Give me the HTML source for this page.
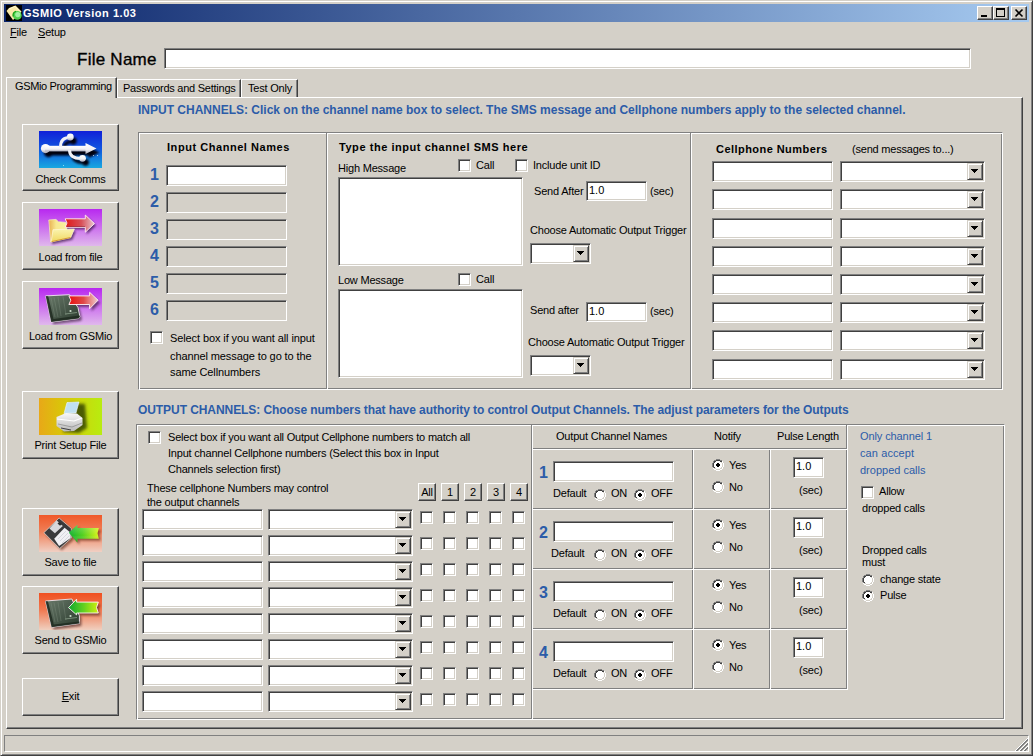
<!DOCTYPE html><html><head><meta charset="utf-8"><style>*{margin:0;padding:0;box-sizing:border-box}
html,body{width:1033px;height:756px;overflow:hidden;background:#D4D0C8}
#win{position:relative;width:1033px;height:756px;background:#D4D0C8;font-family:"Liberation Sans",sans-serif;font-size:11px;color:#000;overflow:hidden}
#win div{position:absolute}
.t{white-space:nowrap;line-height:12px;letter-spacing:-0.2px}
.b{white-space:nowrap;line-height:12px;font-weight:bold;letter-spacing:0.55px}
.bl{white-space:nowrap;line-height:14px;font-weight:bold;font-size:12px;color:#2C5CA8}
.num{white-space:nowrap;line-height:16px;font-weight:bold;font-size:16px;color:#2C5CA8}
.tb{border:1px solid;border-color:#808080 #FFFFFF #FFFFFF #808080;box-shadow:inset 1px 1px 0 #404040,inset -1px -1px 0 #D4D0C8}
.tv{position:absolute;left:2px;top:2px;line-height:12px;font-size:11px;white-space:nowrap}
.cb{border:1px solid;border-color:#808080 #FFFFFF #FFFFFF #808080;box-shadow:inset 1px 1px 0 #404040,inset -1px -1px 0 #D4D0C8;background:#fff}
.btn{border:1px solid;border-color:#FFFFFF #404040 #404040 #FFFFFF;box-shadow:inset -1px -1px 0 #808080;background:#D4D0C8}
.grp{border:1px solid;border-color:#808080 #FFFFFF #FFFFFF #808080;box-shadow:inset 1px 1px 0 #FFFFFF,inset -1px -1px 0 #808080}
.dd{right:1px;top:1px;width:16px;height:17px;border:1px solid;border-color:#D4D0C8 #404040 #404040 #D4D0C8;box-shadow:inset 1px 1px 0 #fff,inset -1px -1px 0 #808080;background:#D4D0C8}
.dd b{position:absolute;left:3px;top:5px;width:0;height:0;border-left:3.5px solid transparent;border-right:3.5px solid transparent;border-top:4px solid #000}
.rd{width:12px;height:12px}
.tab{border:1px solid;border-color:#fff #404040 transparent #fff;border-bottom:none;box-shadow:inset -1px 0 0 #808080;background:#D4D0C8}
.tab.sel{z-index:2}
.rd{width:12px;height:12px;border-radius:50%;border:1px solid;border-color:#808080 #fff #fff #808080;box-shadow:inset 1px 1px 0 #404040,inset -1px -1px 0 #D4D0C8;background:#fff}
.rd i{position:absolute;left:3px;top:3px;width:4px;height:4px;background:#000;border-radius:1px}
.tab.sel{z-index:0}
</style></head><body><div id="win"><div style="left:0;top:0;width:1033px;height:756px;border:1px solid;border-color:#D4D0C8 #404040 #404040 #D4D0C8;box-shadow:inset 1px 1px 0 #fff,inset -1px -1px 0 #808080"></div><div style="left:4px;top:4px;width:1025px;height:18px;background:linear-gradient(to right,#0A246A,#A6CAF0)"></div><div id="icon" style="left:6px;top:5px;width:16px;height:16px"><svg width="16" height="16" viewBox="0 0 16 16" style="position:absolute;left:0;top:0;display:block"><defs></defs>
<rect width="16" height="16" fill="#000"/>
<path d="M9.5 0.5 L15.5 6.5 L14 9 L7 15 L0.5 6 L3 3 Z" fill="#F8E8A8"/>
<path d="M3 4 L9 1.5 L14 6.5" fill="none" stroke="#FFF8D0" stroke-width="1"/>
<circle cx="11.3" cy="10.4" r="4.4" fill="#50D050"/>
<circle cx="11.8" cy="9.6" r="2.6" fill="#A0F0A0"/>
<path d="M7.2 11.5 A4.4 4.4 0 0 1 10 6.3" stroke="#10A010" stroke-width="1.2" fill="none"/>
</svg></div><div class="b" style="left:23px;top:7px;color:#fff;letter-spacing:0.53px">GSMIO Version 1.03</div><div class="btn" style="left:977px;top:6px;width:16px;height:14px;"><div style="left:3px;top:8px;width:6px;height:2px;background:#000"></div></div><div class="btn" style="left:993px;top:6px;width:16px;height:14px;"><div style="left:2px;top:1px;width:9px;height:9px;border:1px solid #000;border-top-width:2px"></div></div><div class="btn" style="left:1011px;top:6px;width:16px;height:14px;"><svg width="16" height="14" style="position:absolute;left:-1px;top:-1px"><path d="M4.5 3.5 L11.5 10.5 M11.5 3.5 L4.5 10.5" stroke="#000" stroke-width="1.6"/></svg></div><div class="t" style="left:10px;top:26px;"><u>F</u>ile</div><div class="t" style="left:38px;top:26px;"><u>S</u>etup</div><div class="t" style="left:77px;top:51px;font-size:17px;line-height:18px;letter-spacing:0.25px;-webkit-text-stroke:0.35px #000">File Name</div><div class="tb" style="left:164px;top:48px;width:807px;height:21px;background:#fff;"></div><div style="left:6px;top:97px;width:1017px;height:632px;border:1px solid;border-color:#FFFFFF #404040 #404040 #FFFFFF;box-shadow:inset -1px -1px 0 #808080"></div><div class="tab" style="left:117px;top:79px;width:124px;height:18px"></div><div class="tab" style="left:241px;top:79px;width:57px;height:18px"></div><div class="tab sel" style="left:6px;top:77px;width:111px;height:21px"></div><div class="t" style="left:15px;top:80px;letter-spacing:-0.35px">GSMio Programming</div><div class="t" style="left:123px;top:82px;letter-spacing:-0.25px">Passwords and Settings</div><div class="t" style="left:248px;top:82px;letter-spacing:-0.2px">Test Only</div><div class="btn" style="left:22px;top:124px;width:97px;height:67px;"></div><div style="left:39px;top:131px;width:63px;height:37px"><svg width="63" height="37" viewBox="0 0 63 37" style="position:absolute;left:0;top:0;display:block"><defs><linearGradient id="gusb" x1="0" y1="0" x2="0" y2="1"><stop offset="0" stop-color="#1020D8"/><stop offset="0.5" stop-color="#1058E0"/><stop offset="1" stop-color="#18A8E0"/></linearGradient>
<filter id="fblur" x="-20%" y="-20%" width="140%" height="140%"><feGaussianBlur stdDeviation="0.95"/></filter>
<linearGradient id="gwhite" x1="0" y1="0" x2="0" y2="1"><stop offset="0" stop-color="#FFFFFF"/><stop offset="0.6" stop-color="#F0F0F4"/><stop offset="1" stop-color="#A8A8B8"/></linearGradient></defs><rect width="63" height="37" fill="url(#gusb)"/><g filter="url(#fblur)" opacity="1"><g transform="translate(3,4)">
<circle cx="6.5" cy="17.6" r="4.6" fill="#000010"/>
<rect x="6" y="14.8" width="42" height="5.6" fill="#000010"/>
<path d="M46.5 12 L57.5 17.5 L46.5 23 Z" fill="#000010"/>
<path d="M21.5 16 C21.5 10 24 6.5 30.5 6.5" stroke="#000010" stroke-width="3" fill="none"/>
<circle cx="31.3" cy="6" r="3.4" fill="#000010"/>
<path d="M30.5 19 C30.5 24.5 34 27.5 42 27.5" stroke="#000010" stroke-width="3" fill="none"/>
<circle cx="43.5" cy="27.3" r="3.4" fill="#000010"/>
</g></g><g transform="translate(0,0)">
<circle cx="6.5" cy="17.6" r="4.6" fill="url(#gwhite)"/>
<rect x="6" y="14.8" width="42" height="5.6" fill="url(#gwhite)"/>
<path d="M46.5 12 L57.5 17.5 L46.5 23 Z" fill="url(#gwhite)"/>
<path d="M21.5 16 C21.5 10 24 6.5 30.5 6.5" stroke="#F0F0F6" stroke-width="3" fill="none"/>
<circle cx="31.3" cy="6" r="3.4" fill="url(#gwhite)"/>
<path d="M30.5 19 C30.5 24.5 34 27.5 42 27.5" stroke="#F0F0F6" stroke-width="3" fill="none"/>
<circle cx="43.5" cy="27.3" r="3.4" fill="url(#gwhite)"/>
</g><rect x="54" y="24" width="0.8" height="0.8" fill="#fff"/><rect x="58" y="24" width="0.8" height="0.8" fill="#fff"/><rect x="24" y="34" width="0.8" height="0.8" fill="#cff"/></svg></div><div class="t" style="left:22px;width:97px;top:173px;text-align:center">Check Comms</div><div class="btn" style="left:22px;top:202px;width:97px;height:68px;"></div><div style="left:39px;top:209px;width:63px;height:37px"><svg width="63" height="37" viewBox="0 0 63 37" style="position:absolute;left:0;top:0;display:block"><defs><linearGradient id="gpur" x1="0" y1="0" x2="0" y2="1"><stop offset="0" stop-color="#B828F0"/><stop offset="1" stop-color="#E0B8EC"/></linearGradient>
<linearGradient id="gred" x1="0" y1="0" x2="1" y2="0"><stop offset="0" stop-color="#E01818"/><stop offset="0.55" stop-color="#D85058"/><stop offset="1" stop-color="#E8C8D0"/></linearGradient>
<linearGradient id="gyel" x1="0" y1="0" x2="0" y2="1"><stop offset="0" stop-color="#FAF4B0"/><stop offset="1" stop-color="#F0D860"/></linearGradient>
<linearGradient id="gyb" x1="0" y1="0" x2="1" y2="0"><stop offset="0" stop-color="#E8B050"/><stop offset="0.4" stop-color="#F8E890"/><stop offset="1" stop-color="#F8F0A0"/></linearGradient>
<filter id="fb2" x="-20%" y="-20%" width="140%" height="140%"><feGaussianBlur stdDeviation="0.9"/></filter></defs><rect width="63" height="37" fill="url(#gpur)"/><g filter="url(#fb2)" opacity="0.7" transform="translate(1.5,2)"><path d="M26.2 9.8 L46.3 9.8 L46.3 6.1 L55.5 14.6 L46.3 23.2 L46.3 18.3 L26.2 18.3 L28 14 Z" fill="#301040"/><path d="M14 20.7 L35.4 20 L31.7 28.7 L12.2 33 Z" fill="#301040"/><path d="M9.8 11 L17 10.4 L19.5 12.8 L27 13.4 L28 21 L12.2 33 L11.6 33 Z" fill="#301040"/></g><path d="M9.8 11 L17 10.4 L19.5 12.8 L27 13.4 L28 21 L12.2 33 L11.6 33 Z" fill="url(#gyb)" stroke="#F8F0C8" stroke-width="0.7"/><path d="M26.2 9.8 L46.3 9.8 L46.3 6.1 L55.5 14.6 L46.3 23.2 L46.3 18.3 L26.2 18.3 L28 14 Z" fill="url(#gred)" stroke="#FFF0F8" stroke-width="0.9"/><path d="M28 17.6 L46 17.6" stroke="#801020" stroke-width="0.8" opacity="0.7"/><path d="M14 20.7 L35.4 20 L31.7 28.7 L12.2 33 Z" fill="url(#gyel)" stroke="#FFF8D8" stroke-width="0.7"/><path d="M12.6 32.6 L31.5 28.5" stroke="#D09020" stroke-width="0.9"/></svg></div><div class="t" style="left:22px;width:97px;top:251px;text-align:center">Load from file</div><div class="btn" style="left:22px;top:281px;width:97px;height:68px;"></div><div style="left:39px;top:288px;width:63px;height:37px"><svg width="63" height="37" viewBox="0 0 63 37" style="position:absolute;left:0;top:0;display:block"><defs><linearGradient id="gbgr" x1="0" y1="0" x2="0" y2="1"><stop offset="0" stop-color="#B828F0"/><stop offset="1" stop-color="#E0B8EC"/></linearGradient>
<linearGradient id="gred2" x1="0" y1="0" x2="1" y2="0"><stop offset="0" stop-color="#E81010"/><stop offset="0.5" stop-color="#E04848"/><stop offset="1" stop-color="#F0D0D0"/></linearGradient>
<linearGradient id="ggrn" x1="0" y1="0" x2="1" y2="0"><stop offset="0" stop-color="#10A830"/><stop offset="0.5" stop-color="#60D020"/><stop offset="1" stop-color="#D0F010"/></linearGradient>
<linearGradient id="gdevr" x1="0" y1="0" x2="1" y2="1"><stop offset="0" stop-color="#6A7A6A"/><stop offset="0.5" stop-color="#4A5A4C"/><stop offset="1" stop-color="#2A3A2C"/></linearGradient>
<filter id="fb3r" x="-20%" y="-20%" width="140%" height="140%"><feGaussianBlur stdDeviation="1"/></filter></defs><rect width="63" height="37" fill="url(#gbgr)"/><g filter="url(#fb3r)" opacity="0.6" transform="translate(2,2.5)"><path d="M6.7 7.9 L30.5 6.7 L39 19.5 L40.9 28.7 L39.6 30.5 L12.2 34.1 Z" fill="#301830"/><path d="M29.9 7.9 L50.6 7.9 L50.6 4.3 L59.1 12.2 L50.6 20.7 L50.6 16.5 L29.9 16.5 L31.8 12.2 Z" fill="#301830"/></g><path d="M6.7 7.9 L30.5 6.7 L39 19.5 L40.9 28.7 L39.6 30.5 L12.2 34.1 Z" fill="url(#gdevr)" stroke="#F0E8F0" stroke-width="0.9"/><path d="M12 10 L16 29 M15 9.5 L19 29 M19 9 L22 28 M24 8.5 L27 27" stroke="#8A9A8A" stroke-width="0.5" opacity="0.6"/><path d="M6.7 7.9 L9.2 8.3 L14.5 31 L40.6 27.6 L40.9 28.7 L39.6 30.5 L12.2 34.1 Z" fill="#1E2A20" opacity="0.85"/><circle cx="31.5" cy="23" r="1.1" fill="#D0E0D0"/><path d="M26 26 L38 24.5" stroke="#90A890" stroke-width="0.7"/><path d="M29.9 7.9 L50.6 7.9 L50.6 4.3 L59.1 12.2 L50.6 20.7 L50.6 16.5 L29.9 16.5 L31.8 12.2 Z" fill="url(#gred2)" stroke="#FFF4F8" stroke-width="0.9"/></svg></div><div class="t" style="left:22px;width:97px;top:330px;text-align:center">Load from GSMio</div><div class="btn" style="left:22px;top:391px;width:97px;height:68px;"></div><div style="left:39px;top:398px;width:63px;height:37px"><svg width="63" height="37" viewBox="0 0 63 37" style="position:absolute;left:0;top:0;display:block"><defs><linearGradient id="gpr" x1="0" y1="0" x2="1" y2="0"><stop offset="0" stop-color="#E8A818"/><stop offset="0.4" stop-color="#D8C808"/><stop offset="1" stop-color="#B8EC10"/></linearGradient>
<linearGradient id="gpb" x1="0" y1="0" x2="0" y2="1"><stop offset="0" stop-color="#F8F8F8"/><stop offset="1" stop-color="#B8B8B8"/></linearGradient>
<filter id="fb4" x="-30%" y="-30%" width="160%" height="160%"><feGaussianBlur stdDeviation="1.6"/></filter></defs><rect width="63" height="37" fill="url(#gpr)"/><g filter="url(#fb4)" opacity="0.75"><path d="M30 5 L46 6 L48 30 L40 35 L24 34 Z" fill="#203000"/></g><path d="M28 4.5 L40 4 L37 15 L25 15.5 Z" fill="#C0E0F0" stroke="#F0F8FF" stroke-width="0.6"/><path d="M17.5 19 L27 15 L38 15.5 L43.5 20 L43.5 27 L35 33 L25 33.5 L17.5 28 Z" fill="url(#gpb)"/><path d="M18 21 L35 23 L43 20" stroke="#FFFFFF" stroke-width="1.2" fill="none"/><path d="M19 26 L33 29 L43 25" stroke="#909090" stroke-width="0.8" fill="none"/><path d="M22 30 L32 32" stroke="#404040" stroke-width="1" fill="none"/></svg></div><div class="t" style="left:22px;width:97px;top:439px;text-align:center">Print Setup File</div><div class="btn" style="left:22px;top:508px;width:97px;height:68px;"></div><div style="left:39px;top:515px;width:63px;height:37px"><svg width="63" height="37" viewBox="0 0 63 37" style="position:absolute;left:0;top:0;display:block"><defs><linearGradient id="gor" x1="0" y1="0" x2="0" y2="1"><stop offset="0" stop-color="#F05828"/><stop offset="0.45" stop-color="#F08058"/><stop offset="1" stop-color="#F0D0C4"/></linearGradient>
<linearGradient id="ggrn2" x1="0" y1="0" x2="1" y2="0"><stop offset="0" stop-color="#10B030"/><stop offset="0.45" stop-color="#50D020"/><stop offset="1" stop-color="#D8F418"/></linearGradient>
<linearGradient id="gglos" x1="0" y1="0" x2="0" y2="1"><stop offset="0" stop-color="#FFFFFF" stop-opacity="0.25"/><stop offset="0.6" stop-color="#FFFFFF" stop-opacity="0"/><stop offset="1" stop-color="#004000" stop-opacity="0.35"/></linearGradient>
<filter id="fb5" x="-20%" y="-20%" width="140%" height="140%"><feGaussianBlur stdDeviation="1"/></filter></defs><rect width="63" height="37" fill="url(#gor)"/><g filter="url(#fb5)" opacity="0.5" transform="translate(2,2)"><path d="M4.9 17.7 L20.1 3 L32.3 13.4 L32.3 23.2 L20.7 33.5 Z" fill="#401000"/><path d="M29.9 17.7 L38.4 9.8 L38.4 13.1 L59.8 13.1 L58.5 18.3 L59.8 23.8 L38.4 23.8 L38.4 27.4 Z" fill="#401000"/></g><path d="M4.9 17.7 L20.1 3 L32.3 13.4 L32.3 23.2 L20.7 33.5 Z" fill="#3A3A3C" stroke="#E8E0D8" stroke-width="0.7"/><path d="M10.4 13.4 L17.7 5.5 L23.8 11 L15.9 18.3 Z" fill="#D8D8DC"/><path d="M18.5 8.5 L20.5 6.8 L23 9 L21 10.8 Z" fill="#303030"/><path d="M15.2 23.8 L25.6 12.8 L31.7 17.8 L31.7 23 L20.1 31.1 Z" fill="#F0F0F4"/><path d="M19 24 L27 16 M21 26 L29 18 M23 28 L30.5 20.5" stroke="#B0B0C0" stroke-width="0.4"/><path d="M29.9 17.7 L38.4 9.8 L38.4 13.1 L59.8 13.1 L58.5 18.3 L59.8 23.8 L38.4 23.8 L38.4 27.4 Z" fill="url(#ggrn2)"/><path d="M29.9 17.7 L38.4 9.8 L38.4 13.1 L59.8 13.1 L58.5 18.3 L59.8 23.8 L38.4 23.8 L38.4 27.4 Z" fill="url(#gglos)"/></svg></div><div class="t" style="left:22px;width:97px;top:556px;text-align:center">Save to file</div><div class="btn" style="left:22px;top:586px;width:97px;height:68px;"></div><div style="left:39px;top:593px;width:63px;height:37px"><svg width="63" height="37" viewBox="0 0 63 37" style="position:absolute;left:0;top:0;display:block"><defs><linearGradient id="gbgg" x1="0" y1="0" x2="0" y2="1"><stop offset="0" stop-color="#F05020"/><stop offset="0.45" stop-color="#F07850"/><stop offset="1" stop-color="#F0D0C0"/></linearGradient>
<linearGradient id="gred2" x1="0" y1="0" x2="1" y2="0"><stop offset="0" stop-color="#E81010"/><stop offset="0.5" stop-color="#E04848"/><stop offset="1" stop-color="#F0D0D0"/></linearGradient>
<linearGradient id="ggrn" x1="0" y1="0" x2="1" y2="0"><stop offset="0" stop-color="#10A830"/><stop offset="0.5" stop-color="#60D020"/><stop offset="1" stop-color="#D0F010"/></linearGradient>
<linearGradient id="gdevg" x1="0" y1="0" x2="1" y2="1"><stop offset="0" stop-color="#6A7A6A"/><stop offset="0.5" stop-color="#4A5A4C"/><stop offset="1" stop-color="#2A3A2C"/></linearGradient>
<filter id="fb3g" x="-20%" y="-20%" width="140%" height="140%"><feGaussianBlur stdDeviation="1"/></filter></defs><rect width="63" height="37" fill="url(#gbgg)"/><g filter="url(#fb3g)" opacity="0.6" transform="translate(2,2.5)"><path d="M6.5 8 L32.9 6 L40.4 22.7 L40.4 30.5 L12.6 34.3 Z" fill="#401818"/><path d="M29.5 14.6 L37.6 6.2 L37.6 9.1 L59.3 9.1 L57.5 14.5 L59.3 20 L37.6 20 L37.6 21.9 Z" fill="#401818"/></g><path d="M6.5 8 L32.9 6 L40.4 22.7 L40.4 30.5 L12.6 34.3 Z" fill="url(#gdevg)" stroke="#F0E8F0" stroke-width="0.9"/><path d="M12 10 L16 29 M15 9.5 L19 29 M19 9 L22 28 M24 8.5 L27 27" stroke="#8A9A8A" stroke-width="0.5" opacity="0.6"/><path d="M6.5 8 L9 8.4 L14.8 31.6 L40.4 28.5 L40.4 30.5 L12.6 34.3 Z" fill="#1E2A20" opacity="0.85"/><circle cx="31.5" cy="23" r="1.1" fill="#D0E0D0"/><path d="M26 26 L38 24.5" stroke="#90A890" stroke-width="0.7"/><path d="M29.5 14.6 L37.6 6.2 L37.6 9.1 L59.3 9.1 L57.5 14.5 L59.3 20 L37.6 20 L37.6 21.9 Z" fill="url(#ggrn)" stroke="#FFF4F8" stroke-width="0.9"/></svg></div><div class="t" style="left:22px;width:97px;top:634px;text-align:center">Send to GSMio</div><div class="btn" style="left:22px;top:678px;width:97px;height:38px;"></div><div class="t" style="left:22px;width:97px;top:690px;text-align:center"><u>E</u>xit</div><div class="bl" style="left:138px;top:103px;">INPUT CHANNELS: Click on the channel name box to select. The SMS message and Cellphone numbers apply to the selected channel.</div><div class="grp" style="left:138px;top:132px;width:865px;height:258px;"></div><div style="left:326px;top:132px;width:1px;height:257px;background:#808080"></div><div style="left:327px;top:133px;width:1px;height:257px;background:#fff;z-index:1"></div><div style="left:690px;top:132px;width:1px;height:257px;background:#808080"></div><div style="left:691px;top:133px;width:1px;height:257px;background:#fff;z-index:1"></div><div class="b" style="left:167px;top:141px;">Input Channel Names</div><div class="tb" style="left:166px;top:165px;width:121px;height:21px;background:#fff;"></div><div class="num" style="left:150px;top:167px;">1</div><div class="tb" style="left:166px;top:192px;width:121px;height:21px;background:#D4D0C8;"></div><div class="num" style="left:150px;top:194px;">2</div><div class="tb" style="left:166px;top:219px;width:121px;height:21px;background:#D4D0C8;"></div><div class="num" style="left:150px;top:221px;">3</div><div class="tb" style="left:166px;top:246px;width:121px;height:21px;background:#D4D0C8;"></div><div class="num" style="left:150px;top:248px;">4</div><div class="tb" style="left:166px;top:273px;width:121px;height:21px;background:#D4D0C8;"></div><div class="num" style="left:150px;top:275px;">5</div><div class="tb" style="left:166px;top:300px;width:121px;height:21px;background:#D4D0C8;"></div><div class="num" style="left:150px;top:302px;">6</div><div class="cb" style="left:150px;top:331px;width:13px;height:13px;"></div><div class="t" style="left:170px;top:332px;letter-spacing:-0.1px">Select box if you want all input</div><div class="t" style="left:170px;top:350px;letter-spacing:-0.1px">channel message to go to the</div><div class="t" style="left:170px;top:366px;letter-spacing:-0.1px">same Cellnumbers</div><div class="b" style="left:339px;top:141px;">Type the input channel SMS here</div><div class="t" style="left:338px;top:162px;">High Message</div><div class="cb" style="left:458px;top:159px;width:13px;height:13px;"></div><div class="t" style="left:476px;top:159px;">Call</div><div class="cb" style="left:515px;top:159px;width:13px;height:13px;"></div><div class="t" style="left:533px;top:159px;">Include unit ID</div><div class="tb" style="left:338px;top:177px;width:185px;height:89px;background:#fff;"></div><div class="t" style="left:534px;top:185px;">Send After</div><div class="tb" style="left:586px;top:181px;width:61px;height:20px;background:#fff;"><span class="tv">1.0</span></div><div class="t" style="left:650px;top:185px;">(sec)</div><div class="t" style="left:530px;top:224px;">Choose Automatic Output Trigger</div><div class="tb" style="left:530px;top:243px;width:61px;height:21px;background:#fff"><div class="dd"><svg width="7" height="4" style="position:absolute;left:3px;top:5px" shape-rendering="crispEdges"><path d="M0 0h7v1h-1v1h-1v1h-1v1h-1v-1h-1v-1h-1v-1h-1z" fill="#000"/></svg></div></div><div class="t" style="left:338px;top:274px;">Low Message</div><div class="cb" style="left:458px;top:273px;width:13px;height:13px;"></div><div class="t" style="left:476px;top:273px;">Call</div><div class="tb" style="left:338px;top:289px;width:185px;height:89px;background:#fff;"></div><div class="t" style="left:530px;top:304px;">Send after</div><div class="tb" style="left:586px;top:302px;width:61px;height:20px;background:#fff;"><span class="tv">1.0</span></div><div class="t" style="left:650px;top:305px;">(sec)</div><div class="t" style="left:528px;top:336px;">Choose Automatic Output Trigger</div><div class="tb" style="left:530px;top:355px;width:61px;height:21px;background:#fff"><div class="dd"><svg width="7" height="4" style="position:absolute;left:3px;top:5px" shape-rendering="crispEdges"><path d="M0 0h7v1h-1v1h-1v1h-1v1h-1v-1h-1v-1h-1v-1h-1z" fill="#000"/></svg></div></div><div class="b" style="left:716px;top:143px;letter-spacing:0.45px">Cellphone Numbers</div><div class="t" style="left:852px;top:143px;">(send messages to...)</div><div class="tb" style="left:712px;top:161px;width:121px;height:21px;background:#fff;"></div><div class="tb" style="left:840px;top:161px;width:145px;height:21px;background:#fff"><div class="dd"><svg width="7" height="4" style="position:absolute;left:3px;top:5px" shape-rendering="crispEdges"><path d="M0 0h7v1h-1v1h-1v1h-1v1h-1v-1h-1v-1h-1v-1h-1z" fill="#000"/></svg></div></div><div class="tb" style="left:712px;top:189px;width:121px;height:21px;background:#fff;"></div><div class="tb" style="left:840px;top:189px;width:145px;height:21px;background:#fff"><div class="dd"><svg width="7" height="4" style="position:absolute;left:3px;top:5px" shape-rendering="crispEdges"><path d="M0 0h7v1h-1v1h-1v1h-1v1h-1v-1h-1v-1h-1v-1h-1z" fill="#000"/></svg></div></div><div class="tb" style="left:712px;top:218px;width:121px;height:21px;background:#fff;"></div><div class="tb" style="left:840px;top:218px;width:145px;height:21px;background:#fff"><div class="dd"><svg width="7" height="4" style="position:absolute;left:3px;top:5px" shape-rendering="crispEdges"><path d="M0 0h7v1h-1v1h-1v1h-1v1h-1v-1h-1v-1h-1v-1h-1z" fill="#000"/></svg></div></div><div class="tb" style="left:712px;top:246px;width:121px;height:21px;background:#fff;"></div><div class="tb" style="left:840px;top:246px;width:145px;height:21px;background:#fff"><div class="dd"><svg width="7" height="4" style="position:absolute;left:3px;top:5px" shape-rendering="crispEdges"><path d="M0 0h7v1h-1v1h-1v1h-1v1h-1v-1h-1v-1h-1v-1h-1z" fill="#000"/></svg></div></div><div class="tb" style="left:712px;top:274px;width:121px;height:21px;background:#fff;"></div><div class="tb" style="left:840px;top:274px;width:145px;height:21px;background:#fff"><div class="dd"><svg width="7" height="4" style="position:absolute;left:3px;top:5px" shape-rendering="crispEdges"><path d="M0 0h7v1h-1v1h-1v1h-1v1h-1v-1h-1v-1h-1v-1h-1z" fill="#000"/></svg></div></div><div class="tb" style="left:712px;top:302px;width:121px;height:21px;background:#fff;"></div><div class="tb" style="left:840px;top:302px;width:145px;height:21px;background:#fff"><div class="dd"><svg width="7" height="4" style="position:absolute;left:3px;top:5px" shape-rendering="crispEdges"><path d="M0 0h7v1h-1v1h-1v1h-1v1h-1v-1h-1v-1h-1v-1h-1z" fill="#000"/></svg></div></div><div class="tb" style="left:712px;top:330px;width:121px;height:21px;background:#fff;"></div><div class="tb" style="left:840px;top:330px;width:145px;height:21px;background:#fff"><div class="dd"><svg width="7" height="4" style="position:absolute;left:3px;top:5px" shape-rendering="crispEdges"><path d="M0 0h7v1h-1v1h-1v1h-1v1h-1v-1h-1v-1h-1v-1h-1z" fill="#000"/></svg></div></div><div class="tb" style="left:712px;top:359px;width:121px;height:21px;background:#fff;"></div><div class="tb" style="left:840px;top:359px;width:145px;height:21px;background:#fff"><div class="dd"><svg width="7" height="4" style="position:absolute;left:3px;top:5px" shape-rendering="crispEdges"><path d="M0 0h7v1h-1v1h-1v1h-1v1h-1v-1h-1v-1h-1v-1h-1z" fill="#000"/></svg></div></div><div class="bl" style="left:138px;top:403px;letter-spacing:-0.07px">OUTPUT CHANNELS: Choose numbers that have authority to control Output Channels. The adjust parameters for the Outputs</div><div class="grp" style="left:136px;top:424px;width:869px;height:296px;"></div><div class="cb" style="left:148px;top:431px;width:13px;height:13px;"></div><div class="t" style="left:168px;top:431px;">Select box if you want all Output Cellphone numbers to match all</div><div class="t" style="left:168px;top:447px;">Input channel Cellphone numbers (Select this box in Input</div><div class="t" style="left:168px;top:463px;">Channels selection first)</div><div class="t" style="left:147px;top:482px;">These cellphone Numbers may control</div><div class="t" style="left:147px;top:496px;">the output channels</div><div class="btn" style="left:418px;top:483px;width:18px;height:18px;"><span style="position:absolute;left:0;right:0;top:2px;text-align:center;line-height:12px;letter-spacing:-0.3px">All</span></div><div class="btn" style="left:441px;top:483px;width:18px;height:18px;"><span style="position:absolute;left:0;right:0;top:2px;text-align:center;line-height:12px;letter-spacing:-0.3px">1</span></div><div class="btn" style="left:464px;top:483px;width:18px;height:18px;"><span style="position:absolute;left:0;right:0;top:2px;text-align:center;line-height:12px;letter-spacing:-0.3px">2</span></div><div class="btn" style="left:487px;top:483px;width:18px;height:18px;"><span style="position:absolute;left:0;right:0;top:2px;text-align:center;line-height:12px;letter-spacing:-0.3px">3</span></div><div class="btn" style="left:510px;top:483px;width:18px;height:18px;"><span style="position:absolute;left:0;right:0;top:2px;text-align:center;line-height:12px;letter-spacing:-0.3px">4</span></div><div class="tb" style="left:142px;top:509px;width:121px;height:21px;background:#fff;"></div><div class="tb" style="left:268px;top:509px;width:145px;height:21px;background:#fff"><div class="dd"><svg width="7" height="4" style="position:absolute;left:3px;top:5px" shape-rendering="crispEdges"><path d="M0 0h7v1h-1v1h-1v1h-1v1h-1v-1h-1v-1h-1v-1h-1z" fill="#000"/></svg></div></div><div class="cb" style="left:420px;top:511px;width:13px;height:13px;"></div><div class="cb" style="left:443px;top:511px;width:13px;height:13px;"></div><div class="cb" style="left:466px;top:511px;width:13px;height:13px;"></div><div class="cb" style="left:489px;top:511px;width:13px;height:13px;"></div><div class="cb" style="left:512px;top:511px;width:13px;height:13px;"></div><div class="tb" style="left:142px;top:535px;width:121px;height:21px;background:#fff;"></div><div class="tb" style="left:268px;top:535px;width:145px;height:21px;background:#fff"><div class="dd"><svg width="7" height="4" style="position:absolute;left:3px;top:5px" shape-rendering="crispEdges"><path d="M0 0h7v1h-1v1h-1v1h-1v1h-1v-1h-1v-1h-1v-1h-1z" fill="#000"/></svg></div></div><div class="cb" style="left:420px;top:537px;width:13px;height:13px;"></div><div class="cb" style="left:443px;top:537px;width:13px;height:13px;"></div><div class="cb" style="left:466px;top:537px;width:13px;height:13px;"></div><div class="cb" style="left:489px;top:537px;width:13px;height:13px;"></div><div class="cb" style="left:512px;top:537px;width:13px;height:13px;"></div><div class="tb" style="left:142px;top:561px;width:121px;height:21px;background:#fff;"></div><div class="tb" style="left:268px;top:561px;width:145px;height:21px;background:#fff"><div class="dd"><svg width="7" height="4" style="position:absolute;left:3px;top:5px" shape-rendering="crispEdges"><path d="M0 0h7v1h-1v1h-1v1h-1v1h-1v-1h-1v-1h-1v-1h-1z" fill="#000"/></svg></div></div><div class="cb" style="left:420px;top:563px;width:13px;height:13px;"></div><div class="cb" style="left:443px;top:563px;width:13px;height:13px;"></div><div class="cb" style="left:466px;top:563px;width:13px;height:13px;"></div><div class="cb" style="left:489px;top:563px;width:13px;height:13px;"></div><div class="cb" style="left:512px;top:563px;width:13px;height:13px;"></div><div class="tb" style="left:142px;top:587px;width:121px;height:21px;background:#fff;"></div><div class="tb" style="left:268px;top:587px;width:145px;height:21px;background:#fff"><div class="dd"><svg width="7" height="4" style="position:absolute;left:3px;top:5px" shape-rendering="crispEdges"><path d="M0 0h7v1h-1v1h-1v1h-1v1h-1v-1h-1v-1h-1v-1h-1z" fill="#000"/></svg></div></div><div class="cb" style="left:420px;top:589px;width:13px;height:13px;"></div><div class="cb" style="left:443px;top:589px;width:13px;height:13px;"></div><div class="cb" style="left:466px;top:589px;width:13px;height:13px;"></div><div class="cb" style="left:489px;top:589px;width:13px;height:13px;"></div><div class="cb" style="left:512px;top:589px;width:13px;height:13px;"></div><div class="tb" style="left:142px;top:613px;width:121px;height:21px;background:#fff;"></div><div class="tb" style="left:268px;top:613px;width:145px;height:21px;background:#fff"><div class="dd"><svg width="7" height="4" style="position:absolute;left:3px;top:5px" shape-rendering="crispEdges"><path d="M0 0h7v1h-1v1h-1v1h-1v1h-1v-1h-1v-1h-1v-1h-1z" fill="#000"/></svg></div></div><div class="cb" style="left:420px;top:615px;width:13px;height:13px;"></div><div class="cb" style="left:443px;top:615px;width:13px;height:13px;"></div><div class="cb" style="left:466px;top:615px;width:13px;height:13px;"></div><div class="cb" style="left:489px;top:615px;width:13px;height:13px;"></div><div class="cb" style="left:512px;top:615px;width:13px;height:13px;"></div><div class="tb" style="left:142px;top:639px;width:121px;height:21px;background:#fff;"></div><div class="tb" style="left:268px;top:639px;width:145px;height:21px;background:#fff"><div class="dd"><svg width="7" height="4" style="position:absolute;left:3px;top:5px" shape-rendering="crispEdges"><path d="M0 0h7v1h-1v1h-1v1h-1v1h-1v-1h-1v-1h-1v-1h-1z" fill="#000"/></svg></div></div><div class="cb" style="left:420px;top:641px;width:13px;height:13px;"></div><div class="cb" style="left:443px;top:641px;width:13px;height:13px;"></div><div class="cb" style="left:466px;top:641px;width:13px;height:13px;"></div><div class="cb" style="left:489px;top:641px;width:13px;height:13px;"></div><div class="cb" style="left:512px;top:641px;width:13px;height:13px;"></div><div class="tb" style="left:142px;top:665px;width:121px;height:21px;background:#fff;"></div><div class="tb" style="left:268px;top:665px;width:145px;height:21px;background:#fff"><div class="dd"><svg width="7" height="4" style="position:absolute;left:3px;top:5px" shape-rendering="crispEdges"><path d="M0 0h7v1h-1v1h-1v1h-1v1h-1v-1h-1v-1h-1v-1h-1z" fill="#000"/></svg></div></div><div class="cb" style="left:420px;top:667px;width:13px;height:13px;"></div><div class="cb" style="left:443px;top:667px;width:13px;height:13px;"></div><div class="cb" style="left:466px;top:667px;width:13px;height:13px;"></div><div class="cb" style="left:489px;top:667px;width:13px;height:13px;"></div><div class="cb" style="left:512px;top:667px;width:13px;height:13px;"></div><div class="tb" style="left:142px;top:691px;width:121px;height:21px;background:#fff;"></div><div class="tb" style="left:268px;top:691px;width:145px;height:21px;background:#fff"><div class="dd"><svg width="7" height="4" style="position:absolute;left:3px;top:5px" shape-rendering="crispEdges"><path d="M0 0h7v1h-1v1h-1v1h-1v1h-1v-1h-1v-1h-1v-1h-1z" fill="#000"/></svg></div></div><div class="cb" style="left:420px;top:693px;width:13px;height:13px;"></div><div class="cb" style="left:443px;top:693px;width:13px;height:13px;"></div><div class="cb" style="left:466px;top:693px;width:13px;height:13px;"></div><div class="cb" style="left:489px;top:693px;width:13px;height:13px;"></div><div class="cb" style="left:512px;top:693px;width:13px;height:13px;"></div><div style="left:531px;top:424px;width:1px;height:295px;background:#808080"></div><div style="left:532px;top:425px;width:1px;height:295px;background:#fff;z-index:1"></div><div style="left:846px;top:424px;width:1px;height:265px;background:#808080"></div><div style="left:847px;top:425px;width:1px;height:265px;background:#fff;z-index:1"></div><div style="left:531px;top:448px;width:316px;height:1px;background:#808080"></div><div style="left:532px;top:449px;width:316px;height:1px;background:#fff;z-index:1"></div><div style="left:531px;top:508px;width:316px;height:1px;background:#808080"></div><div style="left:532px;top:509px;width:316px;height:1px;background:#fff;z-index:1"></div><div style="left:531px;top:568px;width:316px;height:1px;background:#808080"></div><div style="left:532px;top:569px;width:316px;height:1px;background:#fff;z-index:1"></div><div style="left:531px;top:628px;width:316px;height:1px;background:#808080"></div><div style="left:532px;top:629px;width:316px;height:1px;background:#fff;z-index:1"></div><div style="left:531px;top:688px;width:316px;height:1px;background:#808080"></div><div style="left:532px;top:689px;width:316px;height:1px;background:#fff;z-index:1"></div><div style="left:692px;top:449px;width:1px;height:240px;background:#808080"></div><div style="left:693px;top:450px;width:1px;height:240px;background:#fff;z-index:1"></div><div style="left:769px;top:449px;width:1px;height:240px;background:#808080"></div><div style="left:770px;top:450px;width:1px;height:240px;background:#fff;z-index:1"></div><div class="t" style="left:556px;top:430px;">Output Channel Names</div><div class="t" style="left:714px;top:430px;">Notify</div><div class="t" style="left:777px;top:430px;">Pulse Length</div><div class="num" style="left:539px;top:465px;">1</div><div class="tb" style="left:553px;top:461px;width:121px;height:21px;background:#fff;"></div><div class="t" style="left:553px;top:487px;">Default</div><div style="left:594px;top:489px;width:12px;height:12px"><svg width="12" height="12" style="display:block" shape-rendering="crispEdges"><path fill="#808080" d="M4 0h4v1h-4zM2 1h2v1h-2zM8 1h2v1h-2zM1 2h1v1h-1zM1 3h1v1h-1zM0 4h1v1h-1zM0 5h1v1h-1zM0 6h1v1h-1zM0 7h1v1h-1zM1 8h1v1h-1z"/><path fill="#404040" d="M4 1h4v1h-4zM2 2h2v1h-2zM8 2h2v1h-2zM2 3h1v1h-1zM1 4h1v1h-1zM1 5h1v1h-1zM1 6h1v1h-1zM1 7h1v1h-1zM2 8h1v1h-1z"/><path fill="#FFFFFF" d="M4 2h4v1h-4zM3 3h6v1h-6zM2 4h8v1h-8zM2 5h8v1h-8zM2 6h8v1h-8zM2 7h8v1h-8zM3 8h6v1h-6zM4 9h4v1h-4z"/><path fill="#D4D0C8" d="M9 3h1v1h-1zM10 4h1v1h-1zM10 5h1v1h-1zM10 6h1v1h-1zM10 7h1v1h-1zM9 8h1v1h-1zM2 9h2v1h-2zM8 9h2v1h-2zM4 10h4v1h-4z"/><path fill="#FFFFFF" d="M10 2h1v1h-1zM10 3h1v1h-1zM11 4h1v1h-1zM11 5h1v1h-1zM11 6h1v1h-1zM11 7h1v1h-1zM10 8h1v1h-1zM1 9h1v1h-1zM10 9h1v1h-1zM2 10h2v1h-2zM8 10h2v1h-2zM4 11h4v1h-4z"/></svg></div><div class="t" style="left:611px;top:487px;">ON</div><div style="left:634px;top:489px;width:12px;height:12px"><svg width="12" height="12" style="display:block" shape-rendering="crispEdges"><path fill="#808080" d="M4 0h4v1h-4zM2 1h2v1h-2zM8 1h2v1h-2zM1 2h1v1h-1zM1 3h1v1h-1zM0 4h1v1h-1zM0 5h1v1h-1zM0 6h1v1h-1zM0 7h1v1h-1zM1 8h1v1h-1z"/><path fill="#404040" d="M4 1h4v1h-4zM2 2h2v1h-2zM8 2h2v1h-2zM2 3h1v1h-1zM1 4h1v1h-1zM1 5h1v1h-1zM1 6h1v1h-1zM1 7h1v1h-1zM2 8h1v1h-1z"/><path fill="#FFFFFF" d="M4 2h4v1h-4zM3 3h6v1h-6zM2 4h8v1h-8zM2 5h8v1h-8zM2 6h8v1h-8zM2 7h8v1h-8zM3 8h6v1h-6zM4 9h4v1h-4z"/><path fill="#D4D0C8" d="M9 3h1v1h-1zM10 4h1v1h-1zM10 5h1v1h-1zM10 6h1v1h-1zM10 7h1v1h-1zM9 8h1v1h-1zM2 9h2v1h-2zM8 9h2v1h-2zM4 10h4v1h-4z"/><path fill="#FFFFFF" d="M10 2h1v1h-1zM10 3h1v1h-1zM11 4h1v1h-1zM11 5h1v1h-1zM11 6h1v1h-1zM11 7h1v1h-1zM10 8h1v1h-1zM1 9h1v1h-1zM10 9h1v1h-1zM2 10h2v1h-2zM8 10h2v1h-2zM4 11h4v1h-4z"/><path fill="#000" d="M5 4h2v1h1v2h-1v1h-2v-1h-1v-2h1z"/></svg></div><div class="t" style="left:651px;top:487px;">OFF</div><div style="left:712px;top:459px;width:12px;height:12px"><svg width="12" height="12" style="display:block" shape-rendering="crispEdges"><path fill="#808080" d="M4 0h4v1h-4zM2 1h2v1h-2zM8 1h2v1h-2zM1 2h1v1h-1zM1 3h1v1h-1zM0 4h1v1h-1zM0 5h1v1h-1zM0 6h1v1h-1zM0 7h1v1h-1zM1 8h1v1h-1z"/><path fill="#404040" d="M4 1h4v1h-4zM2 2h2v1h-2zM8 2h2v1h-2zM2 3h1v1h-1zM1 4h1v1h-1zM1 5h1v1h-1zM1 6h1v1h-1zM1 7h1v1h-1zM2 8h1v1h-1z"/><path fill="#FFFFFF" d="M4 2h4v1h-4zM3 3h6v1h-6zM2 4h8v1h-8zM2 5h8v1h-8zM2 6h8v1h-8zM2 7h8v1h-8zM3 8h6v1h-6zM4 9h4v1h-4z"/><path fill="#D4D0C8" d="M9 3h1v1h-1zM10 4h1v1h-1zM10 5h1v1h-1zM10 6h1v1h-1zM10 7h1v1h-1zM9 8h1v1h-1zM2 9h2v1h-2zM8 9h2v1h-2zM4 10h4v1h-4z"/><path fill="#FFFFFF" d="M10 2h1v1h-1zM10 3h1v1h-1zM11 4h1v1h-1zM11 5h1v1h-1zM11 6h1v1h-1zM11 7h1v1h-1zM10 8h1v1h-1zM1 9h1v1h-1zM10 9h1v1h-1zM2 10h2v1h-2zM8 10h2v1h-2zM4 11h4v1h-4z"/><path fill="#000" d="M5 4h2v1h1v2h-1v1h-2v-1h-1v-2h1z"/></svg></div><div class="t" style="left:729px;top:459px;">Yes</div><div style="left:712px;top:481px;width:12px;height:12px"><svg width="12" height="12" style="display:block" shape-rendering="crispEdges"><path fill="#808080" d="M4 0h4v1h-4zM2 1h2v1h-2zM8 1h2v1h-2zM1 2h1v1h-1zM1 3h1v1h-1zM0 4h1v1h-1zM0 5h1v1h-1zM0 6h1v1h-1zM0 7h1v1h-1zM1 8h1v1h-1z"/><path fill="#404040" d="M4 1h4v1h-4zM2 2h2v1h-2zM8 2h2v1h-2zM2 3h1v1h-1zM1 4h1v1h-1zM1 5h1v1h-1zM1 6h1v1h-1zM1 7h1v1h-1zM2 8h1v1h-1z"/><path fill="#FFFFFF" d="M4 2h4v1h-4zM3 3h6v1h-6zM2 4h8v1h-8zM2 5h8v1h-8zM2 6h8v1h-8zM2 7h8v1h-8zM3 8h6v1h-6zM4 9h4v1h-4z"/><path fill="#D4D0C8" d="M9 3h1v1h-1zM10 4h1v1h-1zM10 5h1v1h-1zM10 6h1v1h-1zM10 7h1v1h-1zM9 8h1v1h-1zM2 9h2v1h-2zM8 9h2v1h-2zM4 10h4v1h-4z"/><path fill="#FFFFFF" d="M10 2h1v1h-1zM10 3h1v1h-1zM11 4h1v1h-1zM11 5h1v1h-1zM11 6h1v1h-1zM11 7h1v1h-1zM10 8h1v1h-1zM1 9h1v1h-1zM10 9h1v1h-1zM2 10h2v1h-2zM8 10h2v1h-2zM4 11h4v1h-4z"/></svg></div><div class="t" style="left:729px;top:481px;">No</div><div class="tb" style="left:793px;top:457px;width:31px;height:21px;background:#fff;"><span class="tv">1.0</span></div><div class="t" style="left:799px;top:484px;">(sec)</div><div class="num" style="left:539px;top:525px;">2</div><div class="tb" style="left:553px;top:521px;width:121px;height:21px;background:#fff;"></div><div class="t" style="left:551px;top:547px;">Default</div><div style="left:594px;top:549px;width:12px;height:12px"><svg width="12" height="12" style="display:block" shape-rendering="crispEdges"><path fill="#808080" d="M4 0h4v1h-4zM2 1h2v1h-2zM8 1h2v1h-2zM1 2h1v1h-1zM1 3h1v1h-1zM0 4h1v1h-1zM0 5h1v1h-1zM0 6h1v1h-1zM0 7h1v1h-1zM1 8h1v1h-1z"/><path fill="#404040" d="M4 1h4v1h-4zM2 2h2v1h-2zM8 2h2v1h-2zM2 3h1v1h-1zM1 4h1v1h-1zM1 5h1v1h-1zM1 6h1v1h-1zM1 7h1v1h-1zM2 8h1v1h-1z"/><path fill="#FFFFFF" d="M4 2h4v1h-4zM3 3h6v1h-6zM2 4h8v1h-8zM2 5h8v1h-8zM2 6h8v1h-8zM2 7h8v1h-8zM3 8h6v1h-6zM4 9h4v1h-4z"/><path fill="#D4D0C8" d="M9 3h1v1h-1zM10 4h1v1h-1zM10 5h1v1h-1zM10 6h1v1h-1zM10 7h1v1h-1zM9 8h1v1h-1zM2 9h2v1h-2zM8 9h2v1h-2zM4 10h4v1h-4z"/><path fill="#FFFFFF" d="M10 2h1v1h-1zM10 3h1v1h-1zM11 4h1v1h-1zM11 5h1v1h-1zM11 6h1v1h-1zM11 7h1v1h-1zM10 8h1v1h-1zM1 9h1v1h-1zM10 9h1v1h-1zM2 10h2v1h-2zM8 10h2v1h-2zM4 11h4v1h-4z"/></svg></div><div class="t" style="left:611px;top:547px;">ON</div><div style="left:634px;top:549px;width:12px;height:12px"><svg width="12" height="12" style="display:block" shape-rendering="crispEdges"><path fill="#808080" d="M4 0h4v1h-4zM2 1h2v1h-2zM8 1h2v1h-2zM1 2h1v1h-1zM1 3h1v1h-1zM0 4h1v1h-1zM0 5h1v1h-1zM0 6h1v1h-1zM0 7h1v1h-1zM1 8h1v1h-1z"/><path fill="#404040" d="M4 1h4v1h-4zM2 2h2v1h-2zM8 2h2v1h-2zM2 3h1v1h-1zM1 4h1v1h-1zM1 5h1v1h-1zM1 6h1v1h-1zM1 7h1v1h-1zM2 8h1v1h-1z"/><path fill="#FFFFFF" d="M4 2h4v1h-4zM3 3h6v1h-6zM2 4h8v1h-8zM2 5h8v1h-8zM2 6h8v1h-8zM2 7h8v1h-8zM3 8h6v1h-6zM4 9h4v1h-4z"/><path fill="#D4D0C8" d="M9 3h1v1h-1zM10 4h1v1h-1zM10 5h1v1h-1zM10 6h1v1h-1zM10 7h1v1h-1zM9 8h1v1h-1zM2 9h2v1h-2zM8 9h2v1h-2zM4 10h4v1h-4z"/><path fill="#FFFFFF" d="M10 2h1v1h-1zM10 3h1v1h-1zM11 4h1v1h-1zM11 5h1v1h-1zM11 6h1v1h-1zM11 7h1v1h-1zM10 8h1v1h-1zM1 9h1v1h-1zM10 9h1v1h-1zM2 10h2v1h-2zM8 10h2v1h-2zM4 11h4v1h-4z"/><path fill="#000" d="M5 4h2v1h1v2h-1v1h-2v-1h-1v-2h1z"/></svg></div><div class="t" style="left:651px;top:547px;">OFF</div><div style="left:712px;top:519px;width:12px;height:12px"><svg width="12" height="12" style="display:block" shape-rendering="crispEdges"><path fill="#808080" d="M4 0h4v1h-4zM2 1h2v1h-2zM8 1h2v1h-2zM1 2h1v1h-1zM1 3h1v1h-1zM0 4h1v1h-1zM0 5h1v1h-1zM0 6h1v1h-1zM0 7h1v1h-1zM1 8h1v1h-1z"/><path fill="#404040" d="M4 1h4v1h-4zM2 2h2v1h-2zM8 2h2v1h-2zM2 3h1v1h-1zM1 4h1v1h-1zM1 5h1v1h-1zM1 6h1v1h-1zM1 7h1v1h-1zM2 8h1v1h-1z"/><path fill="#FFFFFF" d="M4 2h4v1h-4zM3 3h6v1h-6zM2 4h8v1h-8zM2 5h8v1h-8zM2 6h8v1h-8zM2 7h8v1h-8zM3 8h6v1h-6zM4 9h4v1h-4z"/><path fill="#D4D0C8" d="M9 3h1v1h-1zM10 4h1v1h-1zM10 5h1v1h-1zM10 6h1v1h-1zM10 7h1v1h-1zM9 8h1v1h-1zM2 9h2v1h-2zM8 9h2v1h-2zM4 10h4v1h-4z"/><path fill="#FFFFFF" d="M10 2h1v1h-1zM10 3h1v1h-1zM11 4h1v1h-1zM11 5h1v1h-1zM11 6h1v1h-1zM11 7h1v1h-1zM10 8h1v1h-1zM1 9h1v1h-1zM10 9h1v1h-1zM2 10h2v1h-2zM8 10h2v1h-2zM4 11h4v1h-4z"/><path fill="#000" d="M5 4h2v1h1v2h-1v1h-2v-1h-1v-2h1z"/></svg></div><div class="t" style="left:729px;top:519px;">Yes</div><div style="left:712px;top:541px;width:12px;height:12px"><svg width="12" height="12" style="display:block" shape-rendering="crispEdges"><path fill="#808080" d="M4 0h4v1h-4zM2 1h2v1h-2zM8 1h2v1h-2zM1 2h1v1h-1zM1 3h1v1h-1zM0 4h1v1h-1zM0 5h1v1h-1zM0 6h1v1h-1zM0 7h1v1h-1zM1 8h1v1h-1z"/><path fill="#404040" d="M4 1h4v1h-4zM2 2h2v1h-2zM8 2h2v1h-2zM2 3h1v1h-1zM1 4h1v1h-1zM1 5h1v1h-1zM1 6h1v1h-1zM1 7h1v1h-1zM2 8h1v1h-1z"/><path fill="#FFFFFF" d="M4 2h4v1h-4zM3 3h6v1h-6zM2 4h8v1h-8zM2 5h8v1h-8zM2 6h8v1h-8zM2 7h8v1h-8zM3 8h6v1h-6zM4 9h4v1h-4z"/><path fill="#D4D0C8" d="M9 3h1v1h-1zM10 4h1v1h-1zM10 5h1v1h-1zM10 6h1v1h-1zM10 7h1v1h-1zM9 8h1v1h-1zM2 9h2v1h-2zM8 9h2v1h-2zM4 10h4v1h-4z"/><path fill="#FFFFFF" d="M10 2h1v1h-1zM10 3h1v1h-1zM11 4h1v1h-1zM11 5h1v1h-1zM11 6h1v1h-1zM11 7h1v1h-1zM10 8h1v1h-1zM1 9h1v1h-1zM10 9h1v1h-1zM2 10h2v1h-2zM8 10h2v1h-2zM4 11h4v1h-4z"/></svg></div><div class="t" style="left:729px;top:541px;">No</div><div class="tb" style="left:793px;top:517px;width:31px;height:21px;background:#fff;"><span class="tv">1.0</span></div><div class="t" style="left:799px;top:544px;">(sec)</div><div class="num" style="left:539px;top:585px;">3</div><div class="tb" style="left:553px;top:581px;width:121px;height:21px;background:#fff;"></div><div class="t" style="left:553px;top:607px;">Default</div><div style="left:594px;top:609px;width:12px;height:12px"><svg width="12" height="12" style="display:block" shape-rendering="crispEdges"><path fill="#808080" d="M4 0h4v1h-4zM2 1h2v1h-2zM8 1h2v1h-2zM1 2h1v1h-1zM1 3h1v1h-1zM0 4h1v1h-1zM0 5h1v1h-1zM0 6h1v1h-1zM0 7h1v1h-1zM1 8h1v1h-1z"/><path fill="#404040" d="M4 1h4v1h-4zM2 2h2v1h-2zM8 2h2v1h-2zM2 3h1v1h-1zM1 4h1v1h-1zM1 5h1v1h-1zM1 6h1v1h-1zM1 7h1v1h-1zM2 8h1v1h-1z"/><path fill="#FFFFFF" d="M4 2h4v1h-4zM3 3h6v1h-6zM2 4h8v1h-8zM2 5h8v1h-8zM2 6h8v1h-8zM2 7h8v1h-8zM3 8h6v1h-6zM4 9h4v1h-4z"/><path fill="#D4D0C8" d="M9 3h1v1h-1zM10 4h1v1h-1zM10 5h1v1h-1zM10 6h1v1h-1zM10 7h1v1h-1zM9 8h1v1h-1zM2 9h2v1h-2zM8 9h2v1h-2zM4 10h4v1h-4z"/><path fill="#FFFFFF" d="M10 2h1v1h-1zM10 3h1v1h-1zM11 4h1v1h-1zM11 5h1v1h-1zM11 6h1v1h-1zM11 7h1v1h-1zM10 8h1v1h-1zM1 9h1v1h-1zM10 9h1v1h-1zM2 10h2v1h-2zM8 10h2v1h-2zM4 11h4v1h-4z"/></svg></div><div class="t" style="left:611px;top:607px;">ON</div><div style="left:634px;top:609px;width:12px;height:12px"><svg width="12" height="12" style="display:block" shape-rendering="crispEdges"><path fill="#808080" d="M4 0h4v1h-4zM2 1h2v1h-2zM8 1h2v1h-2zM1 2h1v1h-1zM1 3h1v1h-1zM0 4h1v1h-1zM0 5h1v1h-1zM0 6h1v1h-1zM0 7h1v1h-1zM1 8h1v1h-1z"/><path fill="#404040" d="M4 1h4v1h-4zM2 2h2v1h-2zM8 2h2v1h-2zM2 3h1v1h-1zM1 4h1v1h-1zM1 5h1v1h-1zM1 6h1v1h-1zM1 7h1v1h-1zM2 8h1v1h-1z"/><path fill="#FFFFFF" d="M4 2h4v1h-4zM3 3h6v1h-6zM2 4h8v1h-8zM2 5h8v1h-8zM2 6h8v1h-8zM2 7h8v1h-8zM3 8h6v1h-6zM4 9h4v1h-4z"/><path fill="#D4D0C8" d="M9 3h1v1h-1zM10 4h1v1h-1zM10 5h1v1h-1zM10 6h1v1h-1zM10 7h1v1h-1zM9 8h1v1h-1zM2 9h2v1h-2zM8 9h2v1h-2zM4 10h4v1h-4z"/><path fill="#FFFFFF" d="M10 2h1v1h-1zM10 3h1v1h-1zM11 4h1v1h-1zM11 5h1v1h-1zM11 6h1v1h-1zM11 7h1v1h-1zM10 8h1v1h-1zM1 9h1v1h-1zM10 9h1v1h-1zM2 10h2v1h-2zM8 10h2v1h-2zM4 11h4v1h-4z"/><path fill="#000" d="M5 4h2v1h1v2h-1v1h-2v-1h-1v-2h1z"/></svg></div><div class="t" style="left:651px;top:607px;">OFF</div><div style="left:712px;top:579px;width:12px;height:12px"><svg width="12" height="12" style="display:block" shape-rendering="crispEdges"><path fill="#808080" d="M4 0h4v1h-4zM2 1h2v1h-2zM8 1h2v1h-2zM1 2h1v1h-1zM1 3h1v1h-1zM0 4h1v1h-1zM0 5h1v1h-1zM0 6h1v1h-1zM0 7h1v1h-1zM1 8h1v1h-1z"/><path fill="#404040" d="M4 1h4v1h-4zM2 2h2v1h-2zM8 2h2v1h-2zM2 3h1v1h-1zM1 4h1v1h-1zM1 5h1v1h-1zM1 6h1v1h-1zM1 7h1v1h-1zM2 8h1v1h-1z"/><path fill="#FFFFFF" d="M4 2h4v1h-4zM3 3h6v1h-6zM2 4h8v1h-8zM2 5h8v1h-8zM2 6h8v1h-8zM2 7h8v1h-8zM3 8h6v1h-6zM4 9h4v1h-4z"/><path fill="#D4D0C8" d="M9 3h1v1h-1zM10 4h1v1h-1zM10 5h1v1h-1zM10 6h1v1h-1zM10 7h1v1h-1zM9 8h1v1h-1zM2 9h2v1h-2zM8 9h2v1h-2zM4 10h4v1h-4z"/><path fill="#FFFFFF" d="M10 2h1v1h-1zM10 3h1v1h-1zM11 4h1v1h-1zM11 5h1v1h-1zM11 6h1v1h-1zM11 7h1v1h-1zM10 8h1v1h-1zM1 9h1v1h-1zM10 9h1v1h-1zM2 10h2v1h-2zM8 10h2v1h-2zM4 11h4v1h-4z"/><path fill="#000" d="M5 4h2v1h1v2h-1v1h-2v-1h-1v-2h1z"/></svg></div><div class="t" style="left:729px;top:579px;">Yes</div><div style="left:712px;top:601px;width:12px;height:12px"><svg width="12" height="12" style="display:block" shape-rendering="crispEdges"><path fill="#808080" d="M4 0h4v1h-4zM2 1h2v1h-2zM8 1h2v1h-2zM1 2h1v1h-1zM1 3h1v1h-1zM0 4h1v1h-1zM0 5h1v1h-1zM0 6h1v1h-1zM0 7h1v1h-1zM1 8h1v1h-1z"/><path fill="#404040" d="M4 1h4v1h-4zM2 2h2v1h-2zM8 2h2v1h-2zM2 3h1v1h-1zM1 4h1v1h-1zM1 5h1v1h-1zM1 6h1v1h-1zM1 7h1v1h-1zM2 8h1v1h-1z"/><path fill="#FFFFFF" d="M4 2h4v1h-4zM3 3h6v1h-6zM2 4h8v1h-8zM2 5h8v1h-8zM2 6h8v1h-8zM2 7h8v1h-8zM3 8h6v1h-6zM4 9h4v1h-4z"/><path fill="#D4D0C8" d="M9 3h1v1h-1zM10 4h1v1h-1zM10 5h1v1h-1zM10 6h1v1h-1zM10 7h1v1h-1zM9 8h1v1h-1zM2 9h2v1h-2zM8 9h2v1h-2zM4 10h4v1h-4z"/><path fill="#FFFFFF" d="M10 2h1v1h-1zM10 3h1v1h-1zM11 4h1v1h-1zM11 5h1v1h-1zM11 6h1v1h-1zM11 7h1v1h-1zM10 8h1v1h-1zM1 9h1v1h-1zM10 9h1v1h-1zM2 10h2v1h-2zM8 10h2v1h-2zM4 11h4v1h-4z"/></svg></div><div class="t" style="left:729px;top:601px;">No</div><div class="tb" style="left:793px;top:577px;width:31px;height:21px;background:#fff;"><span class="tv">1.0</span></div><div class="t" style="left:799px;top:604px;">(sec)</div><div class="num" style="left:539px;top:645px;">4</div><div class="tb" style="left:553px;top:641px;width:121px;height:21px;background:#fff;"></div><div class="t" style="left:553px;top:667px;">Default</div><div style="left:594px;top:669px;width:12px;height:12px"><svg width="12" height="12" style="display:block" shape-rendering="crispEdges"><path fill="#808080" d="M4 0h4v1h-4zM2 1h2v1h-2zM8 1h2v1h-2zM1 2h1v1h-1zM1 3h1v1h-1zM0 4h1v1h-1zM0 5h1v1h-1zM0 6h1v1h-1zM0 7h1v1h-1zM1 8h1v1h-1z"/><path fill="#404040" d="M4 1h4v1h-4zM2 2h2v1h-2zM8 2h2v1h-2zM2 3h1v1h-1zM1 4h1v1h-1zM1 5h1v1h-1zM1 6h1v1h-1zM1 7h1v1h-1zM2 8h1v1h-1z"/><path fill="#FFFFFF" d="M4 2h4v1h-4zM3 3h6v1h-6zM2 4h8v1h-8zM2 5h8v1h-8zM2 6h8v1h-8zM2 7h8v1h-8zM3 8h6v1h-6zM4 9h4v1h-4z"/><path fill="#D4D0C8" d="M9 3h1v1h-1zM10 4h1v1h-1zM10 5h1v1h-1zM10 6h1v1h-1zM10 7h1v1h-1zM9 8h1v1h-1zM2 9h2v1h-2zM8 9h2v1h-2zM4 10h4v1h-4z"/><path fill="#FFFFFF" d="M10 2h1v1h-1zM10 3h1v1h-1zM11 4h1v1h-1zM11 5h1v1h-1zM11 6h1v1h-1zM11 7h1v1h-1zM10 8h1v1h-1zM1 9h1v1h-1zM10 9h1v1h-1zM2 10h2v1h-2zM8 10h2v1h-2zM4 11h4v1h-4z"/></svg></div><div class="t" style="left:611px;top:667px;">ON</div><div style="left:634px;top:669px;width:12px;height:12px"><svg width="12" height="12" style="display:block" shape-rendering="crispEdges"><path fill="#808080" d="M4 0h4v1h-4zM2 1h2v1h-2zM8 1h2v1h-2zM1 2h1v1h-1zM1 3h1v1h-1zM0 4h1v1h-1zM0 5h1v1h-1zM0 6h1v1h-1zM0 7h1v1h-1zM1 8h1v1h-1z"/><path fill="#404040" d="M4 1h4v1h-4zM2 2h2v1h-2zM8 2h2v1h-2zM2 3h1v1h-1zM1 4h1v1h-1zM1 5h1v1h-1zM1 6h1v1h-1zM1 7h1v1h-1zM2 8h1v1h-1z"/><path fill="#FFFFFF" d="M4 2h4v1h-4zM3 3h6v1h-6zM2 4h8v1h-8zM2 5h8v1h-8zM2 6h8v1h-8zM2 7h8v1h-8zM3 8h6v1h-6zM4 9h4v1h-4z"/><path fill="#D4D0C8" d="M9 3h1v1h-1zM10 4h1v1h-1zM10 5h1v1h-1zM10 6h1v1h-1zM10 7h1v1h-1zM9 8h1v1h-1zM2 9h2v1h-2zM8 9h2v1h-2zM4 10h4v1h-4z"/><path fill="#FFFFFF" d="M10 2h1v1h-1zM10 3h1v1h-1zM11 4h1v1h-1zM11 5h1v1h-1zM11 6h1v1h-1zM11 7h1v1h-1zM10 8h1v1h-1zM1 9h1v1h-1zM10 9h1v1h-1zM2 10h2v1h-2zM8 10h2v1h-2zM4 11h4v1h-4z"/><path fill="#000" d="M5 4h2v1h1v2h-1v1h-2v-1h-1v-2h1z"/></svg></div><div class="t" style="left:651px;top:667px;">OFF</div><div style="left:712px;top:639px;width:12px;height:12px"><svg width="12" height="12" style="display:block" shape-rendering="crispEdges"><path fill="#808080" d="M4 0h4v1h-4zM2 1h2v1h-2zM8 1h2v1h-2zM1 2h1v1h-1zM1 3h1v1h-1zM0 4h1v1h-1zM0 5h1v1h-1zM0 6h1v1h-1zM0 7h1v1h-1zM1 8h1v1h-1z"/><path fill="#404040" d="M4 1h4v1h-4zM2 2h2v1h-2zM8 2h2v1h-2zM2 3h1v1h-1zM1 4h1v1h-1zM1 5h1v1h-1zM1 6h1v1h-1zM1 7h1v1h-1zM2 8h1v1h-1z"/><path fill="#FFFFFF" d="M4 2h4v1h-4zM3 3h6v1h-6zM2 4h8v1h-8zM2 5h8v1h-8zM2 6h8v1h-8zM2 7h8v1h-8zM3 8h6v1h-6zM4 9h4v1h-4z"/><path fill="#D4D0C8" d="M9 3h1v1h-1zM10 4h1v1h-1zM10 5h1v1h-1zM10 6h1v1h-1zM10 7h1v1h-1zM9 8h1v1h-1zM2 9h2v1h-2zM8 9h2v1h-2zM4 10h4v1h-4z"/><path fill="#FFFFFF" d="M10 2h1v1h-1zM10 3h1v1h-1zM11 4h1v1h-1zM11 5h1v1h-1zM11 6h1v1h-1zM11 7h1v1h-1zM10 8h1v1h-1zM1 9h1v1h-1zM10 9h1v1h-1zM2 10h2v1h-2zM8 10h2v1h-2zM4 11h4v1h-4z"/><path fill="#000" d="M5 4h2v1h1v2h-1v1h-2v-1h-1v-2h1z"/></svg></div><div class="t" style="left:729px;top:639px;">Yes</div><div style="left:712px;top:661px;width:12px;height:12px"><svg width="12" height="12" style="display:block" shape-rendering="crispEdges"><path fill="#808080" d="M4 0h4v1h-4zM2 1h2v1h-2zM8 1h2v1h-2zM1 2h1v1h-1zM1 3h1v1h-1zM0 4h1v1h-1zM0 5h1v1h-1zM0 6h1v1h-1zM0 7h1v1h-1zM1 8h1v1h-1z"/><path fill="#404040" d="M4 1h4v1h-4zM2 2h2v1h-2zM8 2h2v1h-2zM2 3h1v1h-1zM1 4h1v1h-1zM1 5h1v1h-1zM1 6h1v1h-1zM1 7h1v1h-1zM2 8h1v1h-1z"/><path fill="#FFFFFF" d="M4 2h4v1h-4zM3 3h6v1h-6zM2 4h8v1h-8zM2 5h8v1h-8zM2 6h8v1h-8zM2 7h8v1h-8zM3 8h6v1h-6zM4 9h4v1h-4z"/><path fill="#D4D0C8" d="M9 3h1v1h-1zM10 4h1v1h-1zM10 5h1v1h-1zM10 6h1v1h-1zM10 7h1v1h-1zM9 8h1v1h-1zM2 9h2v1h-2zM8 9h2v1h-2zM4 10h4v1h-4z"/><path fill="#FFFFFF" d="M10 2h1v1h-1zM10 3h1v1h-1zM11 4h1v1h-1zM11 5h1v1h-1zM11 6h1v1h-1zM11 7h1v1h-1zM10 8h1v1h-1zM1 9h1v1h-1zM10 9h1v1h-1zM2 10h2v1h-2zM8 10h2v1h-2zM4 11h4v1h-4z"/></svg></div><div class="t" style="left:729px;top:661px;">No</div><div class="tb" style="left:793px;top:637px;width:31px;height:21px;background:#fff;"><span class="tv">1.0</span></div><div class="t" style="left:799px;top:664px;">(sec)</div><div class="t" style="left:860px;top:430px;color:#2C5CA8;letter-spacing:-0.1px">Only channel 1</div><div class="t" style="left:860px;top:447px;color:#2C5CA8;letter-spacing:0.1px">can accept</div><div class="t" style="left:860px;top:464px;color:#2C5CA8;letter-spacing:0">dropped calls</div><div class="cb" style="left:861px;top:486px;width:13px;height:13px;"></div><div class="t" style="left:879px;top:485px;">Allow</div><div class="t" style="left:862px;top:502px;">dropped calls</div><div class="t" style="left:862px;top:544px;">Dropped calls</div><div class="t" style="left:862px;top:556px;">must</div><div style="left:862px;top:574px;width:12px;height:12px"><svg width="12" height="12" style="display:block" shape-rendering="crispEdges"><path fill="#808080" d="M4 0h4v1h-4zM2 1h2v1h-2zM8 1h2v1h-2zM1 2h1v1h-1zM1 3h1v1h-1zM0 4h1v1h-1zM0 5h1v1h-1zM0 6h1v1h-1zM0 7h1v1h-1zM1 8h1v1h-1z"/><path fill="#404040" d="M4 1h4v1h-4zM2 2h2v1h-2zM8 2h2v1h-2zM2 3h1v1h-1zM1 4h1v1h-1zM1 5h1v1h-1zM1 6h1v1h-1zM1 7h1v1h-1zM2 8h1v1h-1z"/><path fill="#FFFFFF" d="M4 2h4v1h-4zM3 3h6v1h-6zM2 4h8v1h-8zM2 5h8v1h-8zM2 6h8v1h-8zM2 7h8v1h-8zM3 8h6v1h-6zM4 9h4v1h-4z"/><path fill="#D4D0C8" d="M9 3h1v1h-1zM10 4h1v1h-1zM10 5h1v1h-1zM10 6h1v1h-1zM10 7h1v1h-1zM9 8h1v1h-1zM2 9h2v1h-2zM8 9h2v1h-2zM4 10h4v1h-4z"/><path fill="#FFFFFF" d="M10 2h1v1h-1zM10 3h1v1h-1zM11 4h1v1h-1zM11 5h1v1h-1zM11 6h1v1h-1zM11 7h1v1h-1zM10 8h1v1h-1zM1 9h1v1h-1zM10 9h1v1h-1zM2 10h2v1h-2zM8 10h2v1h-2zM4 11h4v1h-4z"/></svg></div><div class="t" style="left:880px;top:573px;">change state</div><div style="left:862px;top:590px;width:12px;height:12px"><svg width="12" height="12" style="display:block" shape-rendering="crispEdges"><path fill="#808080" d="M4 0h4v1h-4zM2 1h2v1h-2zM8 1h2v1h-2zM1 2h1v1h-1zM1 3h1v1h-1zM0 4h1v1h-1zM0 5h1v1h-1zM0 6h1v1h-1zM0 7h1v1h-1zM1 8h1v1h-1z"/><path fill="#404040" d="M4 1h4v1h-4zM2 2h2v1h-2zM8 2h2v1h-2zM2 3h1v1h-1zM1 4h1v1h-1zM1 5h1v1h-1zM1 6h1v1h-1zM1 7h1v1h-1zM2 8h1v1h-1z"/><path fill="#FFFFFF" d="M4 2h4v1h-4zM3 3h6v1h-6zM2 4h8v1h-8zM2 5h8v1h-8zM2 6h8v1h-8zM2 7h8v1h-8zM3 8h6v1h-6zM4 9h4v1h-4z"/><path fill="#D4D0C8" d="M9 3h1v1h-1zM10 4h1v1h-1zM10 5h1v1h-1zM10 6h1v1h-1zM10 7h1v1h-1zM9 8h1v1h-1zM2 9h2v1h-2zM8 9h2v1h-2zM4 10h4v1h-4z"/><path fill="#FFFFFF" d="M10 2h1v1h-1zM10 3h1v1h-1zM11 4h1v1h-1zM11 5h1v1h-1zM11 6h1v1h-1zM11 7h1v1h-1zM10 8h1v1h-1zM1 9h1v1h-1zM10 9h1v1h-1zM2 10h2v1h-2zM8 10h2v1h-2zM4 11h4v1h-4z"/><path fill="#000" d="M5 4h2v1h1v2h-1v1h-2v-1h-1v-2h1z"/></svg></div><div class="t" style="left:880px;top:589px;">Pulse</div><div style="left:4px;top:735px;width:1025px;height:17px;border:1px solid;border-color:#808080 #fff #fff #808080"></div><div style="left:1015px;top:738px;width:13px;height:13px"><svg width="13" height="13" style="display:block" shape-rendering="crispEdges"><path fill="#fff" d="M0 12h1v1h-1zM1 11h1v1h-1zM2 10h1v1h-1zM3 9h1v1h-1zM4 8h1v1h-1zM5 7h1v1h-1zM6 6h1v1h-1zM7 5h1v1h-1zM8 4h1v1h-1zM9 3h1v1h-1zM10 2h1v1h-1zM11 1h1v1h-1zM12 0h1v1h-1zM4 12h1v1h-1zM5 11h1v1h-1zM6 10h1v1h-1zM7 9h1v1h-1zM8 8h1v1h-1zM9 7h1v1h-1zM10 6h1v1h-1zM11 5h1v1h-1zM12 4h1v1h-1zM8 12h1v1h-1zM9 11h1v1h-1zM10 10h1v1h-1zM11 9h1v1h-1zM12 8h1v1h-1z"/><path fill="#808080" d="M1 12h1v1h-1zM2 11h1v1h-1zM3 10h1v1h-1zM4 9h1v1h-1zM5 8h1v1h-1zM6 7h1v1h-1zM7 6h1v1h-1zM8 5h1v1h-1zM9 4h1v1h-1zM10 3h1v1h-1zM11 2h1v1h-1zM12 1h1v1h-1zM2 12h1v1h-1zM3 11h1v1h-1zM4 10h1v1h-1zM5 9h1v1h-1zM6 8h1v1h-1zM7 7h1v1h-1zM8 6h1v1h-1zM9 5h1v1h-1zM10 4h1v1h-1zM11 3h1v1h-1zM12 2h1v1h-1zM5 12h1v1h-1zM6 11h1v1h-1zM7 10h1v1h-1zM8 9h1v1h-1zM9 8h1v1h-1zM10 7h1v1h-1zM11 6h1v1h-1zM12 5h1v1h-1zM6 12h1v1h-1zM7 11h1v1h-1zM8 10h1v1h-1zM9 9h1v1h-1zM10 8h1v1h-1zM11 7h1v1h-1zM12 6h1v1h-1zM9 12h1v1h-1zM10 11h1v1h-1zM11 10h1v1h-1zM12 9h1v1h-1zM10 12h1v1h-1zM11 11h1v1h-1zM12 10h1v1h-1z"/></svg></div></div></body></html>
